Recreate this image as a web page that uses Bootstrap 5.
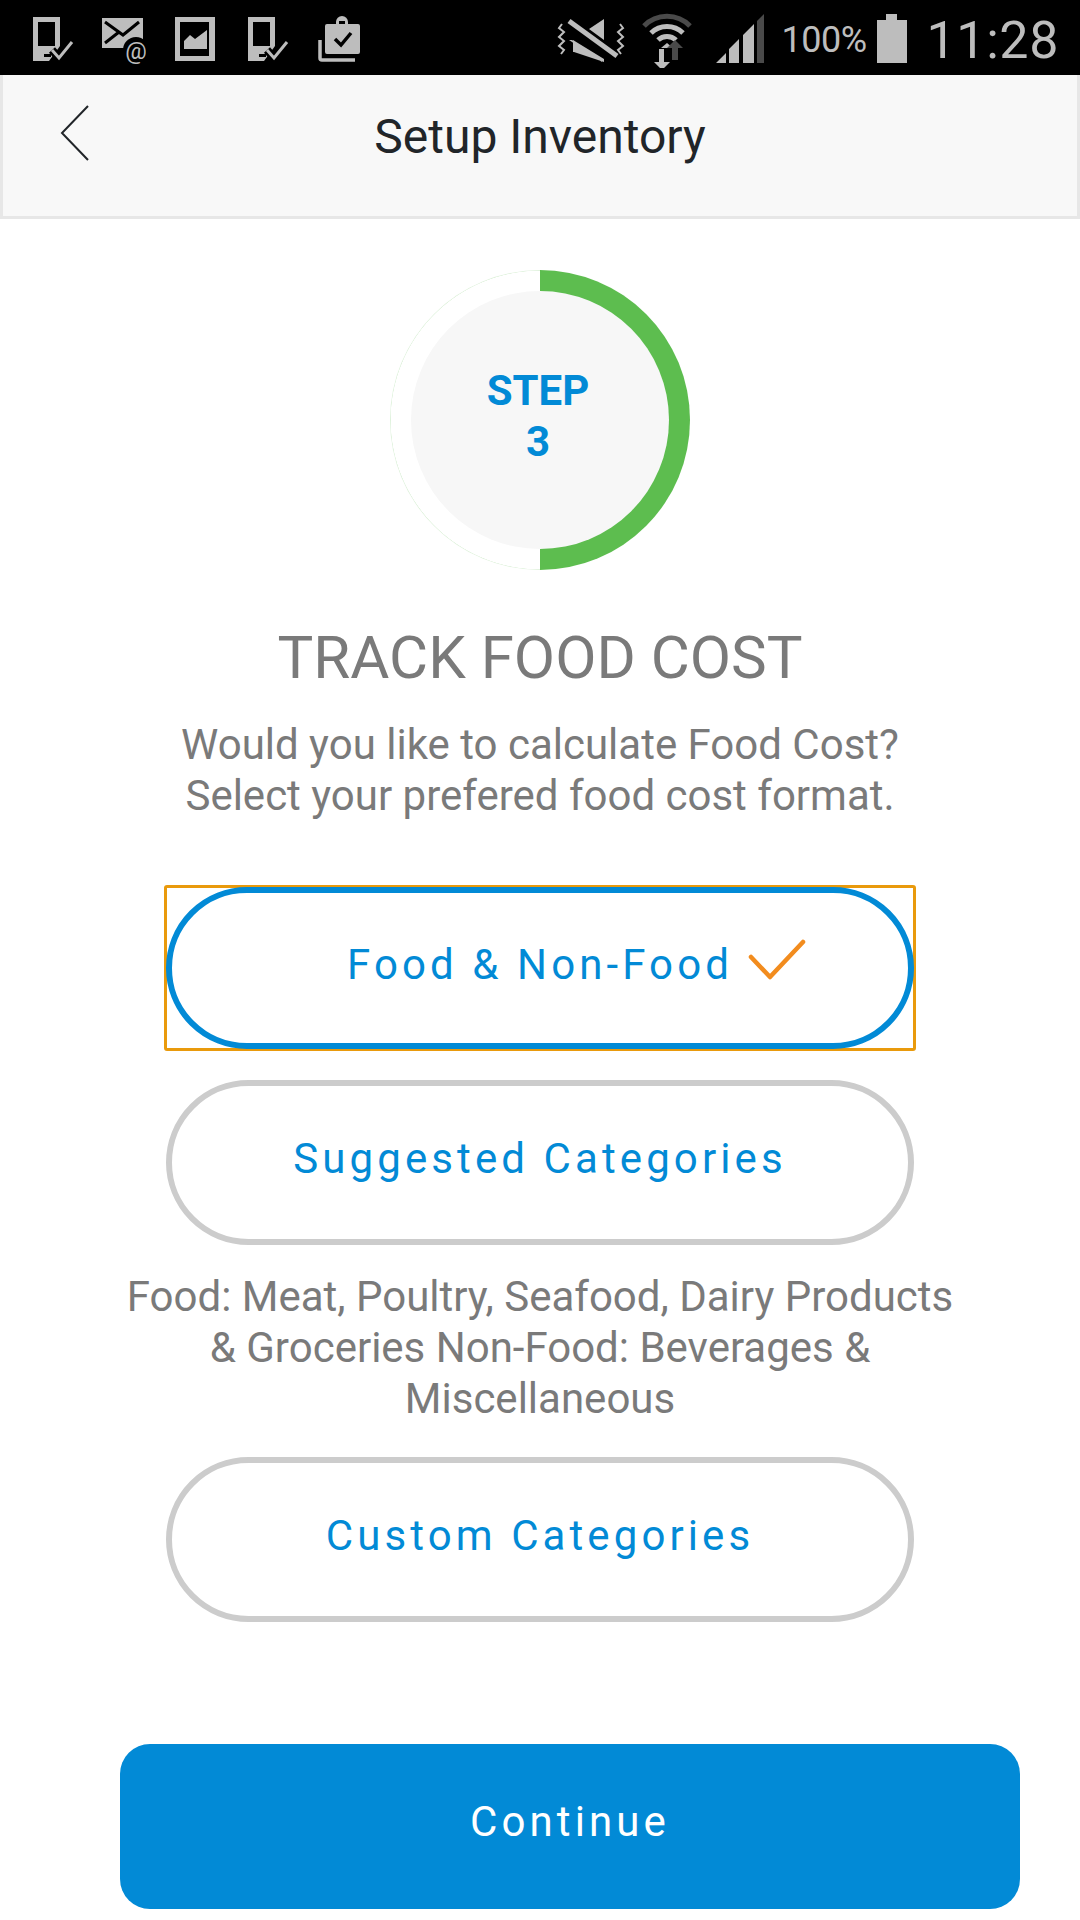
<!DOCTYPE html>
<html lang="en">
<head>
<meta charset="utf-8">
<title>Setup Inventory</title>
<link rel="stylesheet" href="https://cdn.jsdelivr.net/npm/bootstrap@5.3.0/dist/css/bootstrap.min.css">
<style>
body{font-family:Roboto,"Liberation Sans",sans-serif;background:#fff;width:1080px;height:1920px;overflow:hidden;color:#7a7a7a}
.sbar{height:75px;background:#000;color:#bdbdbd;padding-left:30px;padding-top:2px}
.sbar svg{display:block;flex:none}
.ic-one{margin-right:24px}
.ic-mail{margin-right:28px}
.ic-pic{margin-right:29px}
.ic-two{margin-right:25px}
.ic-wifi{margin-left:13px}
.ic-sig{margin-left:23px}
.pct{font-size:36px;letter-spacing:-.5px;line-height:75px;margin-left:16px;width:95px;padding-top:3px}
.clock{font-size:52px;line-height:75px;margin-left:20px;letter-spacing:.6px;padding-right:21px;padding-top:3px}
.tophead{height:144px;background:#f8f8f8;border:solid #e7e7e7;border-width:0 3px 3px;position:relative;padding-bottom:17px}
.tophead h1{font-size:48px;font-weight:400;color:#212529;margin:0;line-height:1}
.backlink{position:absolute;left:57px;top:30px;display:block}
.ringo{width:300px;height:300px;margin:51px auto 0;background:conic-gradient(#5dbd4f 0 50%,transparent 50%),radial-gradient(closest-side,#fff 149px,#dff2dc 149.5px)}
.ringi{width:258px;height:258px;background:#f7f7f7;color:#028ad6;font-size:42px;line-height:51px;font-weight:700;padding-bottom:8px;padding-right:4px}
.goal{font-size:60px;font-weight:400;line-height:64px;color:#7a7a7a;margin:56px 0 0}
.lede{font-size:42px;line-height:51px;color:#7a7a7a;margin:0}
.lede-a{margin-top:29px}
.optbox{width:752px;height:166px;margin:64px auto 0;border:3px solid #e99a0c;border-radius:3px;position:relative}
.optbtn{display:flex;align-items:center;justify-content:center;width:748px;height:165px;margin:0 auto;border:6px solid #cccccc;border-radius:83px;background:#fff;color:#028ad6;font-size:42px;letter-spacing:4.1px;padding:0 0 8px}
.optbtn:hover,.optbtn:active{background:#fff;color:#028ad6}
.optbox .optbtn{width:748px;height:162px;border-color:#028ad6;margin:0;position:absolute;left:-1px;top:-1px;padding-bottom:8px}
.tick{position:absolute;left:580px;top:47px}
.opt-b{margin-top:29px}
.lede-b{margin-top:26px}
.opt-c{margin-top:33px}
.gobtn{display:block;width:900px;height:165px;margin:122px 0 0 120px;background:#028ad6;border:0;border-radius:30px;color:#fff;font-size:42px;letter-spacing:4.1px;padding:0 0 10px}
.gobtn:hover,.gobtn:active{background:#028ad6;color:#fff}
</style>
</head>
<body>
<div class="sbar d-flex align-items-center">
  <div class="d-flex align-items-center flex-grow-1">
    <svg class="ic-one" width="46" height="50" viewBox="0 0 46 50"><path fill="#bdbdbd" d="M3 3h27v29l-11 15H3z"/><path fill="#000" d="M8 8h17v24H8z"/><path fill="#000" d="M14 40h7v3h-7z"/><path d="M22 36l7 8 13-16" fill="none" stroke="#000" stroke-width="8"/><path d="M22 36l7 8 13-16" fill="none" stroke="#bdbdbd" stroke-width="3"/></svg>
    <svg class="ic-mail" width="46" height="50" viewBox="0 0 46 50"><path fill="#bdbdbd" d="M2 4h41v30H2z"/><path d="M5 8l18 13L39 8M5 29l14-11" fill="none" stroke="#000" stroke-width="3"/><circle cx="36" cy="36" r="13" fill="#000"/><text x="36" y="45" text-anchor="middle" font-family="Roboto,sans-serif" font-size="24" fill="#bdbdbd">@</text></svg>
    <svg class="ic-pic" width="42" height="50" viewBox="0 0 42 50"><path fill="#bdbdbd" d="M1 3h40v44H1z"/><path fill="#000" d="M6 8h29v34H6z"/><path fill="#bdbdbd" d="M10 35v-8l6-6 5 4 12-9v19z"/></svg>
    <svg class="ic-two" width="46" height="50" viewBox="0 0 46 50"><path fill="#bdbdbd" d="M3 3h27v29l-11 15H3z"/><path fill="#000" d="M8 8h17v24H8z"/><path fill="#000" d="M14 40h7v3h-7z"/><path d="M22 36l7 8 13-16" fill="none" stroke="#000" stroke-width="8"/><path d="M22 36l7 8 13-16" fill="none" stroke="#bdbdbd" stroke-width="3"/></svg>
    <svg width="46" height="50" viewBox="0 0 46 50"><path fill="#bdbdbd" d="M9 12a2 2 0 0 1 2-2h9v-2a6 6 0 0 1 12 0v2h10a2 2 0 0 1 2 2v26a2 2 0 0 1-2 2H11a2 2 0 0 1-2-2z"/><path fill="#000" d="M23 7h6v3h-6z"/><path d="M19 25l6 6 10-12" fill="none" stroke="#000" stroke-width="3.5"/><path d="M4 26v18a2 2 0 0 0 2 2h33" fill="none" stroke="#bdbdbd" stroke-width="3.5"/></svg>
  </div>
  <svg width="72" height="50" viewBox="0 0 72 50"><path d="M6 10l-3 4 5 4-5 5 5 4-5 5 5 4-3 4M64 10l3 4-5 4 5 5-5 4 5 5-5 4 3 4" fill="none" stroke="#bdbdbd" stroke-width="2"/><path fill="#bdbdbd" d="M48 5v21L33 15zM17 26l31 19v3L18 38H17zM13 26h3l30 18v4z"/><path d="M13 7l48 35" stroke="#bdbdbd" stroke-width="5" fill="none"/><path d="M10 3l50 34" stroke="#000" stroke-width="2" fill="none" transform="translate(-2 8)"/></svg>
  <svg class="ic-wifi" width="52" height="58" viewBox="0 0 52 58"><path d="M3 16a32 32 0 0 1 46 0" fill="none" stroke="#4a4a4a" stroke-width="5"/><path d="M10 23a23 23 0 0 1 32 0M17 30a13 13 0 0 1 18 0" fill="none" stroke="#bdbdbd" stroke-width="5"/><path fill="#bdbdbd" d="M26 33l6 5H20z"/><path fill="#bdbdbd" d="M18 39h5v13h6l-8 8-8-8h5z"/><path fill="#4a4a4a" d="M31 50V38h-5l8-8 8 8h-5v12z"/></svg>
  <svg class="ic-sig" width="50" height="52" viewBox="0 0 50 52"><path fill="#bdbdbd" d="M0 50l10-10v10zM13 50V36l10-10v24zM27 50V22l11-11v39z"/><path fill="#4a4a4a" d="M41 50V8l7-7v49z"/></svg>
  <div class="pct">100%</div>
  <svg width="30" height="50" viewBox="0 0 30 50"><path fill="#bdbdbd" d="M9 0h11v6h10v43H0V6h9z"/></svg>
  <div class="clock">11:28</div>
</div>
<header class="tophead d-flex align-items-center justify-content-center">
  <a class="backlink" href="#" aria-label="Back"><svg width="30" height="58" viewBox="0 0 30 58"><path d="M28 1L2 28l26 27" fill="none" stroke="#212529" stroke-width="2"/></svg></a>
  <h1>Setup Inventory</h1>
</header>
<main class="text-center">
  <div class="ringo rounded-circle d-flex align-items-center justify-content-center">
    <div class="ringi rounded-circle d-flex align-items-center justify-content-center">STEP<br>3</div>
  </div>
  <h2 class="goal">TRACK FOOD COST</h2>
  <p class="lede lede-a">Would you like to calculate Food Cost?<br>Select your prefered food cost format.</p>
  <div class="optbox">
    <button type="button" class="btn optbtn">Food &amp; Non-Food</button>
    <svg class="tick" width="60" height="48" viewBox="0 0 60 48"><path d="M4 22l19 20L56 7" fill="none" stroke="#f28c1e" stroke-width="4.5" stroke-linecap="round" stroke-linejoin="round"/></svg>
  </div>
  <button type="button" class="btn optbtn opt-b">Suggested Categories</button>
  <p class="lede lede-b">Food: Meat, Poultry, Seafood, Dairy Products<br>&amp; Groceries Non-Food: Beverages &amp;<br>Miscellaneous</p>
  <button type="button" class="btn optbtn opt-c">Custom Categories</button>
  <button type="button" class="btn gobtn">Continue</button>
</main>
<script src="https://cdn.jsdelivr.net/npm/bootstrap@5.3.0/dist/js/bootstrap.bundle.min.js"></script>
</body>
</html>
